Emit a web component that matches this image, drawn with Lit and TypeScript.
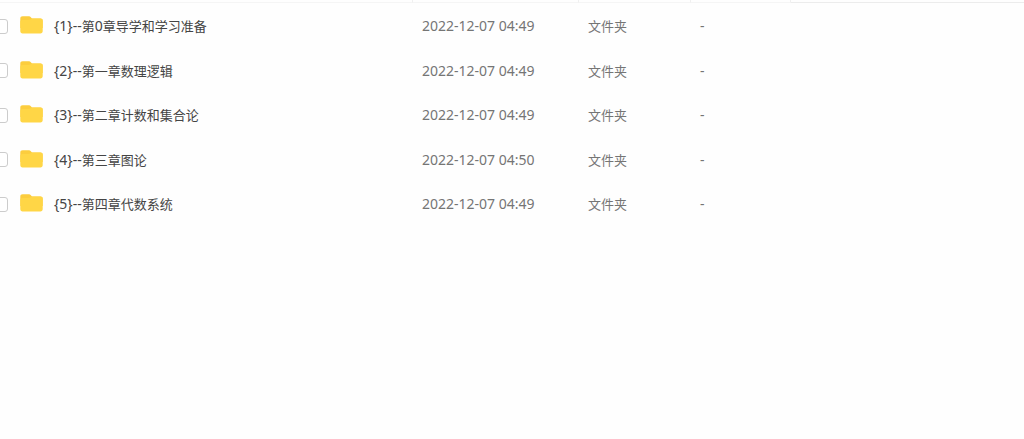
import { LitElement, html, css } from "lit";
import { customElement, property, state } from "lit/decorators.js";

interface Entry {
  prefix: string;
  name: string;
  modified: string;
}

// Splits a label so that Han characters and Latin ones can be sized apart.
const runs = (text: string) =>
  (text.match(/[\u4e00-\u9fff]+|[^\u4e00-\u9fff]+/g) ?? []).map((part) =>
    /[\u4e00-\u9fff]/.test(part) ? html`<span class="han">${part}</span>` : part
  );

@customElement("folder-icon")
class FolderIcon extends LitElement {
  static styles = css`
    :host {
      display: block;
      flex: none;
      width: 24px;
      height: 20px;
    }
    svg {
      display: block;
    }
  `;

  render() {
    return html`<svg width="24" height="20" viewBox="0 0 24 20" aria-hidden="true">
      <path
        d="M.3 2.500C.3 1 1.100.2 2.600.2h6c1 0 1.600.3 2.200 1l1.200 1.300h8.300c1.600 0 2.400.8 2.400 2.300V12H.3Z"
        fill="#fccd3e"
      />
      <path
        d="M.3 6C.3 4.800 1.100 4 2.500 4h5.800c1 0 1.600-.2 2.300-.7l.9-.5c.4-.2.8-.3 1.400-.3h7.400c1.600 0 2.400.8 2.400 2.300v10.200c0 1.600-.8 2.400-2.400 2.400H2.700C1.100 17.400.3 16.600.3 15Z"
        fill="#ffd646"
      />
    </svg>`;
  }
}

@customElement("app-root")
export class AppRoot extends LitElement {
  @property({ type: Array }) entries: Entry[] = [
    { prefix: "{1}--", name: "第0章导学和学习准备", modified: "2022-12-07 04:49" },
    { prefix: "{2}--", name: "第一章数理逻辑", modified: "2022-12-07 04:49" },
    { prefix: "{3}--", name: "第二章计数和集合论", modified: "2022-12-07 04:49" },
    { prefix: "{4}--", name: "第三章图论", modified: "2022-12-07 04:50" },
    { prefix: "{5}--", name: "第四章代数系统", modified: "2022-12-07 04:49" },
  ];

  @state() private selected = new Set<number>();

  static styles = css`
    :host {
      display: block;
      min-height: 100vh;
      overflow: hidden;
      background: #fefefe;
      color: #757575;
      font-family: "Noto Sans", "Noto Sans CJK SC", sans-serif;
      font-size: 14px;
      line-height: 20px;
    }
    .files {
      width: 100%;
      table-layout: fixed;
      border-collapse: separate;
      border-spacing: 0;
    }
    .col-name {
      width: 413px;
    }
    .col-date {
      width: 166px;
    }
    .col-type {
      width: 112px;
    }
    .col-size {
      width: 100px;
    }
    .head {
      height: 3px;
      box-sizing: border-box;
      padding: 0;
      border-right: 1px solid #f0f0f0;
      border-bottom: 1px solid #f5f5f5;
    }
    .head:last-child {
      border-right: 0;
      border-bottom-color: #ececec;
    }
    .files tbody::before {
      content: "";
      display: table-row;
      height: 1px;
    }
    .cell {
      height: 44px;
      box-sizing: border-box;
      padding: 0 9px;
      text-align: left;
      font-weight: 400;
      white-space: nowrap;
    }
    .row:nth-child(even) .cell {
      height: 45px;
    }
    .cell.name {
      padding: 0;
      color: #444;
    }
    .entry {
      display: flex;
      align-items: center;
    }
    .check {
      appearance: none;
      flex: none;
      box-sizing: border-box;
      width: 15px;
      height: 15px;
      margin: 0 12px 0 -7px;
      border: 1px solid #ccc;
      border-radius: 3px;
      background: #fff;
    }
    .check:checked {
      border-color: #06a7ff;
      background: #06a7ff;
    }
    .label {
      display: flex;
      align-items: center;
      gap: 10px;
    }
    .han {
      font-size: 13px;
    }
  `;

  private toggle(index: number) {
    const next = new Set(this.selected);
    if (!next.delete(index)) next.add(index);
    this.selected = next;
  }

  render() {
    return html`
      <table class="files">
        <colgroup>
          <col class="col-name" />
          <col class="col-date" />
          <col class="col-type" />
          <col class="col-size" />
          <col />
        </colgroup>
        <thead>
          <tr>
            ${[0, 1, 2, 3, 4].map(() => html`<th class="head" scope="col"></th>`)}
          </tr>
        </thead>
        <tbody>
          ${this.entries.map(
            (entry, i) => html`<tr class="row">
              <th class="cell name" scope="row">
                <div class="entry">
                  <input
                    class="check"
                    type="checkbox"
                    id="file-${i}"
                    .checked=${this.selected.has(i)}
                    @change=${() => this.toggle(i)}
                  />
                  <label class="label" for="file-${i}">
                    <folder-icon></folder-icon>
                    <span>${entry.prefix}${runs(entry.name)}</span>
                  </label>
                </div>
              </th>
              <td class="cell">${entry.modified}</td>
              <td class="cell">${runs("文件夹")}</td>
              <td class="cell">-</td>
              <td class="cell"></td>
            </tr>`
          )}
        </tbody>
      </table>
    `;
  }
}
